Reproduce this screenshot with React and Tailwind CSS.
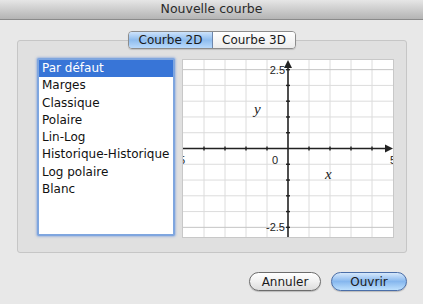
import React from 'react';

const items = [
  'Par défaut',
  'Marges',
  'Classique',
  'Polaire',
  'Lin-Log',
  'Historique-Historique',
  'Log polaire',
  'Blanc',
];

const W = 210;
const H = 177;
const cx = 105;
const cy = 88.5;
const sx = 21;
const sy = 15.77;

const Graph = () => {
  const vLines = [];
  for (let i = -4; i <= 4; i++) if (i !== 0) vLines.push(cx + i * sx);
  const hLines = [];
  for (let j = -5; j <= 5; j++) if (j !== 0) hLines.push(cy + j * sy);

  return (
    <svg width={W} height={H} viewBox={`0 0 ${W} ${H}`} className="block">
      <rect x="0" y="0" width={W} height={H} fill="#ffffff" />
      {vLines.map((x) => (
        <line key={'v' + x} x1={x} y1="0" x2={x} y2={H} stroke="#dcdcdc" strokeWidth="1" />
      ))}
      {hLines.map((y, i) => (
        <line
          key={'h' + y}
          x1="0"
          y1={y}
          x2={W}
          y2={y}
          stroke={i === 0 || i === hLines.length - 1 ? '#c4c4c4' : '#dcdcdc'}
          strokeWidth="1"
        />
      ))}
      {/* axes */}
      <line x1="0" y1={cy} x2={W - 6} y2={cy} stroke="#222" strokeWidth="1.6" />
      <line x1={cx} y1={H} x2={cx} y2="6" stroke="#222" strokeWidth="1.6" />
      <polygon points={`${W},${cy} ${W - 8},${cy - 4} ${W - 8},${cy + 4}`} fill="#222" />
      <polygon points={`${cx},0 ${cx - 4},8 ${cx + 4},8`} fill="#222" />
      {/* ticks */}
      {vLines.map((x) => (
        <line key={'tx' + x} x1={x} y1={cy - 2} x2={x} y2={cy + 2} stroke="#222" strokeWidth="1.4" />
      ))}
      {hLines.map((y) => (
        <line key={'ty' + y} x1={cx - 2} y1={y} x2={cx + 2} y2={y} stroke="#222" strokeWidth="1.4" />
      ))}
      <g fontFamily="'Liberation Sans', Arial, sans-serif" fontSize="11" fill="#222">
        <text x={cx - 3} y="13.5" textAnchor="end">2.5</text>
        <text x={cx - 3} y="171" textAnchor="end">-2.5</text>
        <text x={cx - 10} y="104" textAnchor="end">0</text>
        <text x="-4" y="104">5</text>
        <text x={W - 3} y="104">5</text>
      </g>
      <g fontFamily="'Liberation Serif', 'Times New Roman', serif" fontStyle="italic" fontSize="15" fill="#222">
        <text x="71" y="54">y</text>
        <text x="142" y="119">x</text>
      </g>
    </svg>
  );
};

export default function App() {
  return (
    <div
      className="w-[423px] h-[304px] bg-[#e8e8e8] flex flex-col overflow-hidden text-[#1a1a1a]"
      style={{ fontFamily: "'DejaVu Sans', 'Liberation Sans', sans-serif" }}
    >
      <div className="h-[20px] shrink-0 flex items-center justify-center bg-gradient-to-b from-[#e6e6e6] to-[#b4b4b4] border-b border-[#8a8a8a] text-[12.5px] text-[#2a2a2a]">
        Nouvelle courbe
      </div>

      <div className="flex flex-col px-[16px]">
        <div className="relative z-10 flex justify-center mt-[11px] pl-[1px]">
          <div className="flex h-[18px] rounded-[4px] border border-[#8c8c8c] overflow-hidden text-[12px] shadow-[0_1px_1px_rgba(0,0,0,0.15)]">
            <div className="w-[84px] flex items-center justify-center bg-gradient-to-b from-[#cde3fb] via-[#8ebcee] to-[#b9dafc] border-r border-[#6d87ad]">
              Courbe 2D
            </div>
            <div className="w-[82px] flex items-center justify-center bg-gradient-to-b from-[#ffffff] to-[#ececec]">
              Courbe 3D
            </div>
          </div>
        </div>

        <div className="-mt-[9px] ml-[1px] mr-[0px] h-[213px] bg-[#e0e0e0] border border-[#c6c6c6] rounded-[3px] flex pl-[19px] pt-[17px] gap-[7px]">
          <div className="w-[138px] h-[178px] bg-white border-[2px] border-[#7fa6df] rounded-[2px] shadow-[0_0_2px_1px_rgba(110,150,220,0.5)] flex flex-col pt-[0px]">
            {items.map((it, i) => (
              <div
                key={it}
                className={`h-[17.3px] leading-[17.3px] pl-[3px] text-[12px] whitespace-nowrap ${
                  i === 0 ? 'bg-[#3875d7] text-white' : 'text-[#111]'
                }`}
              >
                {it}
              </div>
            ))}
          </div>
          <div className="mt-[1px] border border-[#c8c8c8] w-[212px] h-[179px] flex items-center justify-center bg-white">
            <Graph />
          </div>
        </div>

        <div className="flex justify-end gap-[10px] mt-[19px]">
          <button className="w-[72px] h-[19px] rounded-full border border-[#6c6c6c] bg-gradient-to-b from-[#ffffff] via-[#f0f0f0] to-[#dcdcdc] text-[12px] flex items-center justify-center shadow-[0_1px_1px_rgba(0,0,0,0.2)]">
            Annuler
          </button>
          <button className="w-[76px] h-[19px] rounded-full border border-[#4a6ea8] bg-gradient-to-b from-[#d6e8fb] via-[#86b7ee] to-[#bde0fd] text-[12px] flex items-center justify-center shadow-[0_1px_1px_rgba(0,0,0,0.2)]">
            Ouvrir
          </button>
        </div>
      </div>
    </div>
  );
}
